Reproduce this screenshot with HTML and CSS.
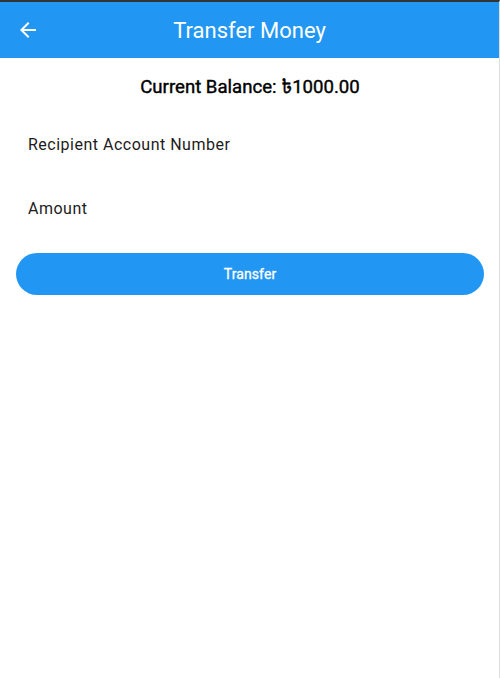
FILE: index.html
```html
<!DOCTYPE html>
<html>
<head>
<meta charset="utf-8">
<link rel="stylesheet" href="styles.css">
</head>
<body>
<div class="frame">
  <header class="appbar">
    <button class="back" aria-label="Back">
      <svg width="24" height="24" viewBox="0 0 24 24"><path d="M20 11H7.83l5.59-5.59L12 4l-8 8 8 8 1.41-1.41L7.83 13H20v-2z" fill="#fff"/></svg>
    </button>
    <h1 class="title">Transfer Money</h1>
  </header>
  <main class="content">
    <div class="balance">Current Balance: ৳1000.00</div>
    <div class="field"><input class="input" type="text" placeholder="Recipient Account Number"></div>
    <div class="field"><input class="input" type="text" placeholder="Amount"></div>
    <button class="transfer">Transfer</button>
  </main>
</div>
</body>
</html>
```
FILE: styles.css
```css
html, body {
  margin: 0;
  padding: 0;
  height: 100%;
  background: #fff;
}
body {
  font-family: Roboto, "Noto Sans", "Noto Sans Bengali", sans-serif;
}
.frame {
  box-sizing: border-box;
  height: 678px;
  border-top: 2px solid #333;
  border-right: 1px solid #dedede;
  display: flex;
  flex-direction: column;
}
.appbar {
  height: 56px;
  background: #2196f3;
  display: flex;
  align-items: center;
  flex-shrink: 0;
}
.back {
  background: none;
  border: 0;
  padding: 0;
  margin-left: 16px;
  width: 24px;
  height: 24px;
  display: flex;
  align-items: center;
  justify-content: center;
}
.title {
  flex: 1;
  margin: 0 40px 0 0;
  text-align: center;
  color: #fff;
  font-size: 22px;
  font-weight: 400;
  letter-spacing: 0;
}
.content {
  padding: 16px 15px 16px 16px;
  display: flex;
  flex-direction: column;
}
.balance {
  text-align: center;
  font-size: 18.6px;
  font-weight: 400;
  -webkit-text-stroke: 0.4px #000;
  line-height: 26px;
  color: #000;
  margin-bottom: 12px;
}
.field {
  height: 64px;
  display: flex;
  align-items: center;
}
.input {
  width: 100%;
  border: 0;
  outline: none;
  padding: 0 12px;
  font-family: Roboto, sans-serif;
  font-size: 16px;
  letter-spacing: 0.5px;
  background: transparent;
  color: #1d1b20;
}
.input::placeholder {
  color: #1d1b20;
  opacity: 1;
}
.transfer {
  margin-top: 13px;
  height: 42px;
  border: 0;
  border-radius: 21px;
  background: #2196f3;
  color: #fff;
  font-family: Roboto, sans-serif;
  font-size: 14px;
  font-weight: 400;
  -webkit-text-stroke: 0.3px #fff;
  letter-spacing: 0.1px;
}
```
